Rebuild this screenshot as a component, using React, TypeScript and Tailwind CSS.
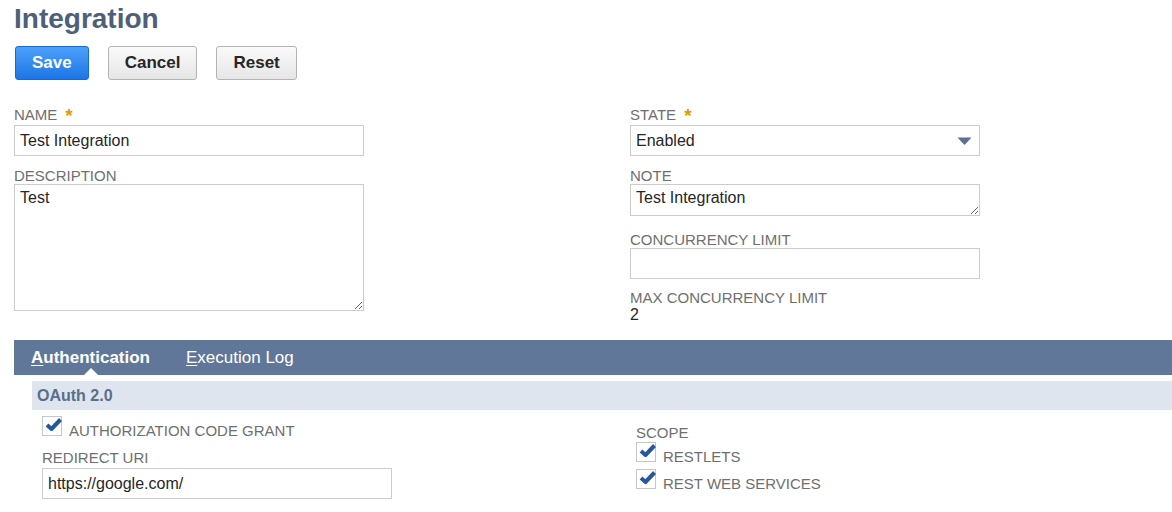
// Integration record form (edit mode)

const labelCls = "flex h-[16px] items-start text-[15px] leading-[16px] uppercase text-[#6f6f6f]";
const fieldCls =
  "block w-[350px] h-[31px] border border-[#cccccc] bg-white px-[5px] text-[16px] text-[#262626] outline-none font-['Liberation_Sans',Arial,sans-serif]";

function Required() {
  return <span className="ml-[8px] mt-[-1px] text-[19px] leading-[19px] font-bold text-[#e39a00]">*</span>;
}

function CheckBox() {
  return (
    <span className="relative block w-[20px] h-[20px] shrink-0 border border-[#c6c6c6] bg-white">
      <svg className="absolute left-[2px] top-[0px]" width="17" height="15" viewBox="0 0 17 15">
        <path d="M2 8 L6.5 12 L15.5 2.5" fill="none" stroke="#25589a" strokeWidth="4" strokeLinejoin="round" />
      </svg>
    </span>
  );
}

function CheckRow({ label }: { label: string }) {
  return (
    <div className="flex items-start">
      <CheckBox />
      <span className="ml-[7px] mt-[7px] text-[15px] leading-[16px] text-[#6f6f6f]">{label}</span>
    </div>
  );
}

export default function App() {
  return (
    <div className="min-h-[512px] bg-white pl-[14px] overflow-hidden font-['Liberation_Sans',Arial,sans-serif] text-[#262626]">
      {/* Title */}
      <h1 className="pt-[3px] text-[28px] leading-[32px] font-bold text-[#4d5f79]">Integration</h1>

      {/* Actions */}
      <div className="mt-[11px] flex gap-[19px] pl-[1px]">
        <button className="h-[34px] px-[16px] rounded-[3px] border border-[#1768cf] bg-gradient-to-b from-[#4ba0f8] to-[#1d75e6] text-[17px] font-bold text-white">
          Save
        </button>
        <button className="h-[34px] px-[16px] rounded-[3px] border border-[#b3b3b3] bg-gradient-to-b from-[#fafafa] to-[#e6e6e6] text-[17px] font-bold text-[#262626]">
          Cancel
        </button>
        <button className="h-[34px] px-[16px] rounded-[3px] border border-[#b3b3b3] bg-gradient-to-b from-[#fafafa] to-[#e6e6e6] text-[17px] font-bold text-[#262626]">
          Reset
        </button>
      </div>

      {/* Main fields */}
      <div className="mt-[27px] flex">
        <div className="w-[616px]">
          <label className={labelCls}>
            Name
            <Required />
          </label>
          <input className={`${fieldCls} mt-[2px]`} value="Test Integration" readOnly />
          <label className={`${labelCls} mt-[12px]`}>Description</label>
          <textarea
            className="block w-[350px] h-[127px] border border-[#cccccc] bg-white px-[5px] pt-[4px] text-[16px] leading-[18px] text-[#262626] outline-none"
            value="Test"
            readOnly
          />
        </div>

        <div className="w-[350px]">
          <label className={labelCls}>
            State
            <Required />
          </label>
          <div className="mt-[2px] flex items-center justify-between w-[350px] h-[31px] border border-[#cccccc] bg-white pl-[5px] pr-[7px] text-[16px]">
            <span>Enabled</span>
            <svg width="15" height="8" viewBox="0 0 15 8">
              <path d="M0.5 0.5 H14.5 L8.3 7.3 Q7.5 8 6.7 7.3 Z" fill="#5b7092" />
            </svg>
          </div>
          <label className={`${labelCls} mt-[12px]`}>Note</label>
          <textarea
            className="block w-[350px] h-[32px] border border-[#cccccc] bg-white px-[5px] pt-[4px] text-[16px] leading-[18px] text-[#262626] outline-none"
            value="Test Integration"
            readOnly
          />
          <label className={`${labelCls} mt-[16px]`}>Concurrency Limit</label>
          <input className={fieldCls} value="" readOnly />
          <label className={`${labelCls} mt-[11px]`}>Max Concurrency Limit</label>
          <div className="text-[16px] leading-[18px]">2</div>
        </div>
      </div>

      {/* Subtabs */}
      <div className="mt-[16px] h-[35px] bg-[#607799] flex items-stretch pl-[17px] text-[17px] leading-[20px] text-white">
        <div className="relative flex items-center font-bold">
          <span>
            <span className="underline underline-offset-[2px]">A</span>uthentication
          </span>
          <span className="absolute left-1/2 -translate-x-1/2 bottom-0 w-0 h-0 border-x-[7px] border-x-transparent border-b-[7px] border-b-white" />
        </div>
        <div className="ml-[36px] flex items-center">
          <span>
            <span className="underline underline-offset-[2px]">E</span>xecution Log
          </span>
        </div>
      </div>

      {/* OAuth section */}
      <div className="ml-[18px] mt-[6px] h-[29px] bg-[#dfe5ef] flex items-center pl-[5px] text-[16px] leading-[18px] font-bold text-[#5b6e8b]">
        OAuth 2.0
      </div>

      <div className="ml-[28px] mt-[6px] flex">
        <div className="w-[594px]">
          <CheckRow label="AUTHORIZATION CODE GRANT" />
          <label className={`${labelCls} mt-[11px]`}>Redirect URI</label>
          <input className={`${fieldCls} mt-[2px]`} value="https://google.com/" readOnly />
        </div>
        <div>
          <label className={`${labelCls} mt-[9px]`}>Scope</label>
          <div className="mt-[1px]">
            <CheckRow label="RESTLETS" />
          </div>
          <div className="mt-[4px]">
            <CheckRow label="REST WEB SERVICES" />
          </div>
        </div>
      </div>
    </div>
  );
}
